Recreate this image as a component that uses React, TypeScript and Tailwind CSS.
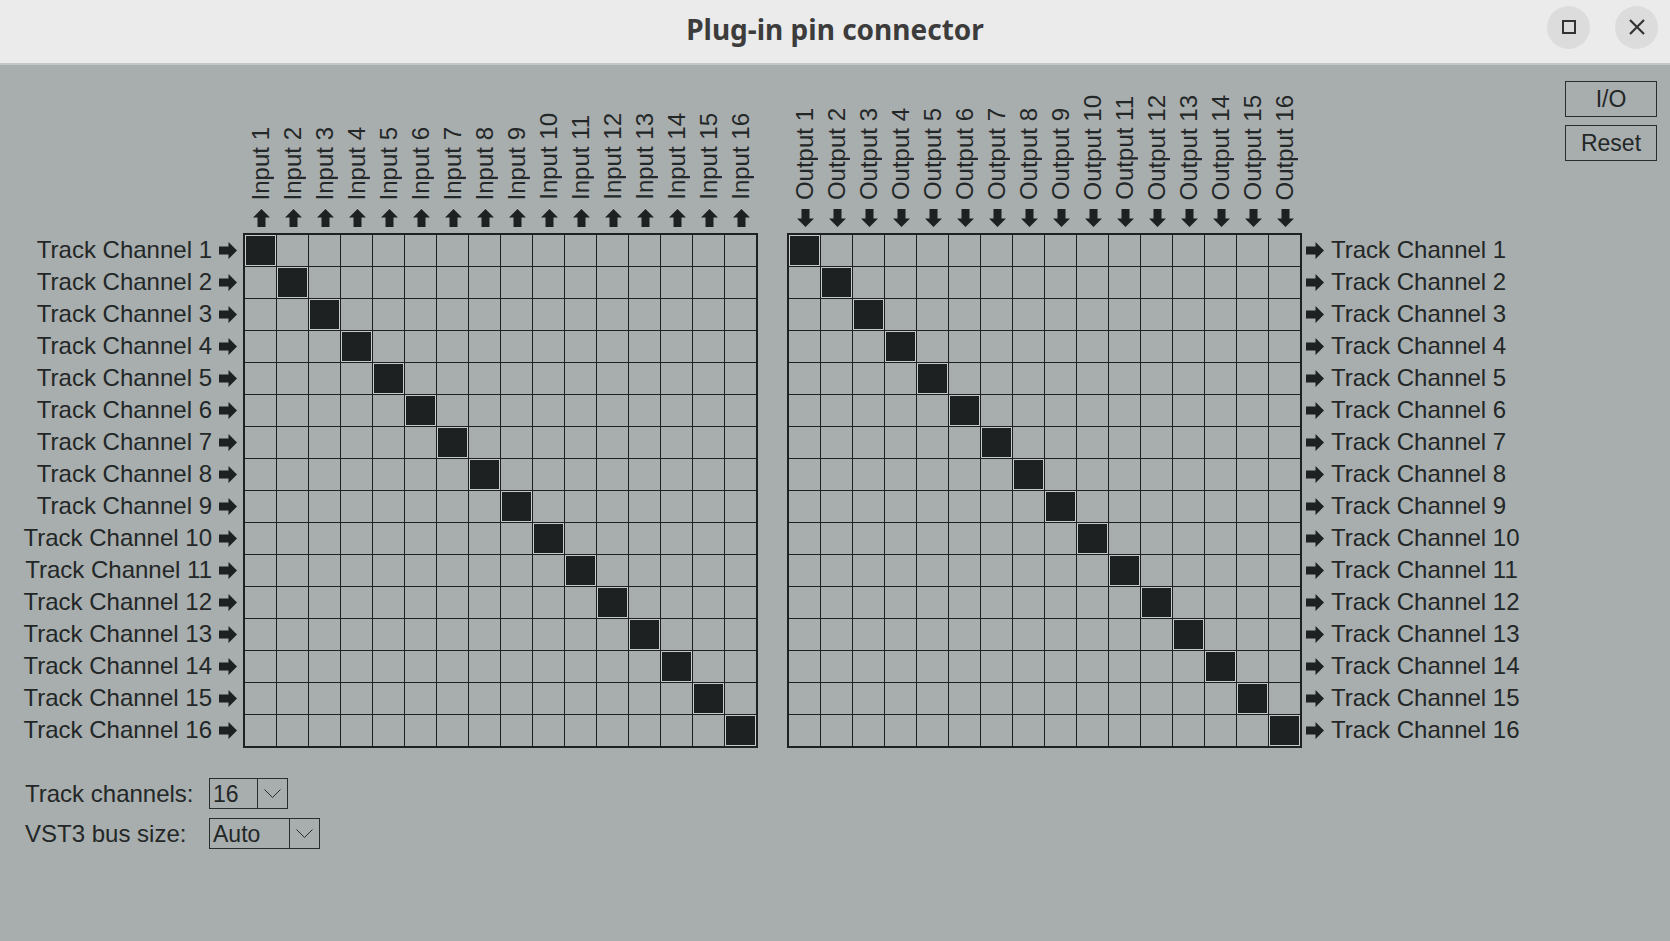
import React from "react";

const CHANNELS = Array.from({ length: 16 }, (_, i) => i + 1);

const RightArrow = () => (
  <svg width="18" height="17" viewBox="0 0 18 17" className="shrink-0">
    <path d="M0 4.5H9.5V0L18 8.5L9.5 17V12.5H0Z" fill="#1e2121" />
  </svg>
);

const UpArrow = () => (
  <svg width="17" height="18" viewBox="0 0 17 18">
    <path d="M4.5 18V8.5H0L8.5 0L17 8.5H12.5V18Z" fill="#1e2121" />
  </svg>
);

const DownArrow = () => (
  <svg width="17" height="18" viewBox="0 0 17 18">
    <path d="M4.5 0V9.5H0L8.5 18L17 9.5H12.5V0Z" fill="#1e2121" />
  </svg>
);

const Chevron = () => (
  <svg width="17" height="9" viewBox="0 0 17 9">
    <polyline points="0.5,0.5 8.5,8.5 16.5,0.5" fill="none" stroke="#2a2d2d" strokeWidth="1" />
  </svg>
);

function Matrix({ kind }: { kind: "in" | "out" }) {
  return (
    <div className="flex flex-col">
      <div className="flex h-[168px] pl-[2px]">
        {CHANNELS.map((n) => (
          <div key={n} className="flex w-[32px] flex-col items-center justify-end pb-[6px]">
            <span className="rotate-180 whitespace-nowrap text-[24px] leading-[24px] [writing-mode:vertical-rl]">
              {kind === "in" ? `Input ${n}` : `Output ${n}`}
            </span>
            <div className="mt-[9px]">{kind === "in" ? <UpArrow /> : <DownArrow />}</div>
          </div>
        ))}
      </div>
      <div className="grid grid-cols-[repeat(16,31px)] grid-rows-[repeat(16,31px)] gap-px border-2 border-[#1e2121] bg-[#1e2121]">
        {CHANNELS.map((r) =>
          CHANNELS.map((c) =>
            r === c ? (
              <div key={`${r}-${c}`} className="border border-[#c6caca] bg-[#1e2121]" />
            ) : (
              <div key={`${r}-${c}`} className="bg-[#a8adad]" />
            )
          )
        )}
      </div>
    </div>
  );
}

function Select({ value, width }: { value: string; width: string }) {
  return (
    <div className="flex h-[31px] border border-[#2a2d2d]">
      <div className={`${width} pl-[3px] text-[23px] leading-[30px]`}>{value}</div>
      <div className="flex w-[30px] items-center justify-center border-l border-[#2a2d2d]">
        <Chevron />
      </div>
    </div>
  );
}

export default function App() {
  return (
    <div className="flex h-[941px] w-[1670px] flex-col overflow-hidden font-['Liberation_Sans',Arial,sans-serif] text-[#232727]">
      <div className="grid h-[65px] shrink-0 grid-cols-[1fr_auto_1fr] border-b-2 border-[#c3c6c6] bg-[#ebebeb]">
        <div />
        <div className="flex items-center pb-[5px] font-['Noto_Sans',sans-serif] text-[28px] font-bold text-[#3c3c3c]">
          Plug-in pin connector
        </div>
        <div className="flex items-center justify-end gap-[25px] pb-[9px] pr-[12px]">
          <div className="flex h-[43px] w-[43px] items-center justify-center rounded-full bg-[#dcdcdc]">
            <div className="h-[14px] w-[14px] border-2 border-[#333]" />
          </div>
          <div className="flex h-[43px] w-[43px] items-center justify-center rounded-full bg-[#dcdcdc]">
            <svg width="16" height="16" viewBox="0 0 16 16">
              <path d="M1 1L15 15M15 1L1 15" stroke="#333" strokeWidth="2.2" />
            </svg>
          </div>
        </div>
      </div>

      <div className="flex flex-1 flex-col bg-[#a8adad]">
        <div className="flex">
          <div className="flex w-[243px] flex-col pr-[6px] pt-[169px]">
            {CHANNELS.map((n) => (
              <div key={n} className="flex h-[32px] items-center justify-end gap-[7px]">
                <span className="whitespace-nowrap text-[24px] leading-none">Track Channel {n}</span>
                <RightArrow />
              </div>
            ))}
          </div>

          <Matrix kind="in" />
          <div className="w-[29px]" />
          <Matrix kind="out" />

          <div className="flex flex-col pl-[4px] pt-[169px]">
            {CHANNELS.map((n) => (
              <div key={n} className="flex h-[32px] items-center gap-[7px]">
                <RightArrow />
                <span className="whitespace-nowrap text-[24px] leading-none">Track Channel {n}</span>
              </div>
            ))}
          </div>

          <div className="ml-auto flex flex-col gap-[8px] pr-[13px] pt-[16px]">
            <div className="flex h-[36px] w-[92px] items-center justify-center border border-[#2a2d2d] text-[23px]">
              I/O
            </div>
            <div className="flex h-[36px] w-[92px] items-center justify-center border border-[#2a2d2d] text-[23px]">
              Reset
            </div>
          </div>
        </div>

        <div className="flex flex-col gap-[9px] pl-[25px] pt-[30px]">
          <div className="flex items-center">
            <span className="w-[184px] text-[24px] leading-none">Track channels:</span>
            <Select value="16" width="w-[47px]" />
          </div>
          <div className="flex items-center">
            <span className="w-[184px] text-[24px] leading-none">VST3 bus size:</span>
            <Select value="Auto" width="w-[79px]" />
          </div>
        </div>
      </div>
    </div>
  );
}
